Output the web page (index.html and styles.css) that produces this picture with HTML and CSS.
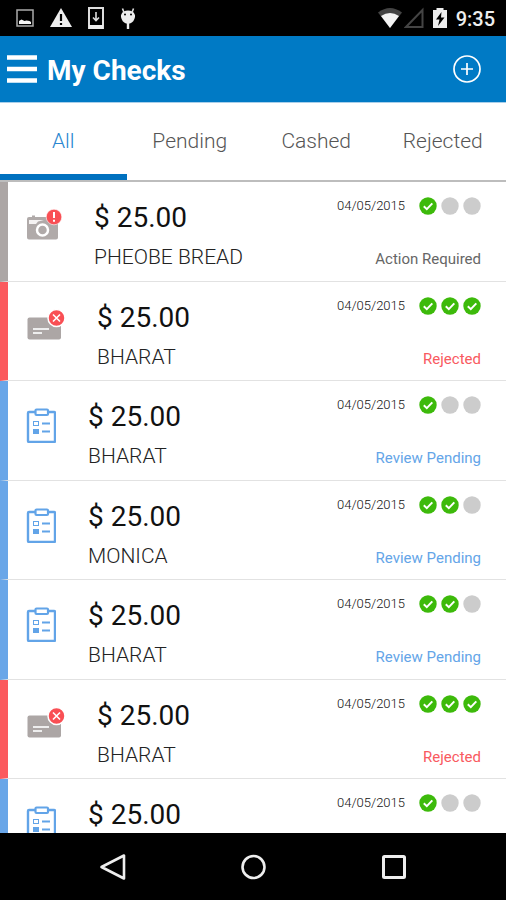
FILE: index.html
```html
<!DOCTYPE html>
<html lang="en">
<head>
<meta charset="utf-8">
<meta name="viewport" content="width=device-width, initial-scale=1">
<title>My Checks</title>
<link rel="stylesheet" href="styles.css">
</head>
<body>
<svg class="defs" aria-hidden="true">
  <symbol id="camera" viewBox="0 0 36 34">
    <path fill="#b0aaa9" d="M3 9h3V7.500h3V9h21a2 2 0 0 1 2 2v18.500a2 2 0 0 1-2 2H3a2 2 0 0 1-2-2V11a2 2 0 0 1 2-2z"/>
    <path fill="#f4f2f2" d="M3 12h15l-6 1.500-2 2.500H3z"/>
    <circle cx="16.500" cy="22" r="5.500" fill="#b0aaa9" stroke="#fff" stroke-width="2.500"/>
    <circle cx="28" cy="9" r="7.800" fill="#f94f54" stroke="#fff" stroke-width=".6"/>
    <path d="M28 4v6M28 11.800v2" stroke="#fff" stroke-width="2"/>
  </symbol>
  <symbol id="card" viewBox="0 0 39 34">
    <rect x="1.500" y="9.500" width="33.500" height="22" rx="2" fill="#aca6a5"/>
    <path d="M7 21h16M7 25h9" stroke="#eee" stroke-width="1.800"/>
    <circle cx="30.500" cy="10" r="8.500" fill="#f94f54" stroke="#fff" stroke-width="1.500"/>
    <path d="M27 6.500l7 7M34 6.500l-7 7" stroke="#fff" stroke-width="1.600"/>
  </symbol>
  <symbol id="clipboard" viewBox="0 0 30 36">
    <rect x="2" y="5" width="27" height="30" rx="1" fill="#fff" stroke="#62a4e8" stroke-width="2.400"/>
    <rect x="9.500" y="2.500" width="12.500" height="5.500" rx="1" fill="#fff" stroke="#62a4e8" stroke-width="2.200"/>
    <rect x="7.500" y="14.500" width="5" height="4" fill="none" stroke="#62a4e8"/>
    <rect x="7" y="22" width="6" height="5" fill="#62a4e8"/>
    <path d="M16 16.500h8M16 24.500h8" stroke="#62a4e8" stroke-width="2"/>
  </symbol>
  <symbol id="done" viewBox="0 0 18 18">
    <circle cx="9" cy="9" r="8.700" fill="#3dba0b"/>
    <path d="M4.800 9.200l3 2.900 5.500-5.700" fill="none" stroke="#fff" stroke-width="2"/>
  </symbol>
  <symbol id="todo" viewBox="0 0 18 18"><circle cx="9" cy="9" r="8.700" fill="#ccc"/></symbol>
</svg>

<div class="status-bar">
  <div class="status-group notices">
    <svg width="18" height="24" viewBox="0 0 18 24"><rect x="1" y="4" width="16" height="16" fill="none" stroke="#aaa" stroke-width="1.500"/><path d="M3 18v-3l2.500-1.500 3 1.500 2-.500 3 .5 1.500 1v2z" fill="#f4f4f4"/></svg>
    <svg width="22" height="24" viewBox="0 0 22 24"><path d="M11 2l11 19H0z" fill="#eee"/><path d="M11 8v7M11 17v2" stroke="#000" stroke-width="2.200"/></svg>
    <svg width="16" height="24" viewBox="0 0 16 24"><path d="M1 2h14v20H1z" fill="none" stroke="#ddd" stroke-width="2"/><path d="M1 19h14v4H1z" fill="#eee"/><path d="M8 6v8M5 11.500l3 3 3-3" fill="none" stroke="#ddd" stroke-width="1.600"/></svg>
    <svg width="16" height="24" viewBox="0 0 16 24"><path d="M3.500 5.500Q8 3.500 12.500 5.500 15.500 8 15 11q-1 5-5 6.500H9.200V23H6.800v-5.500H6Q2 16 1 11 .5 8 3.500 5.500z" fill="#eee"/><path d="M4 6.500L2.500 2.500M12 6.500l1.500-4" stroke="#ddd" stroke-width="1.600"/><circle cx="5" cy="8.500" r="1" fill="#000"/><circle cx="11" cy="8.500" r="1" fill="#000"/></svg>
  </div>
  <div class="status-group signals">
    <svg width="26" height="24" viewBox="0 0 26 24"><path d="M1 6.500Q13-2.500 25 6.500L13 22z" fill="#444"/><path d="M4 10q9-6 18 0l-9 12z" fill="#f4f4f4"/></svg>
    <svg width="20" height="24" viewBox="0 0 20 24"><path d="M18.500 4v17H2z" fill="none" stroke="#444" stroke-width="2"/></svg>
    <svg width="14" height="24" viewBox="0 0 14 24"><path d="M0 4h3.500V2h7v2H14v18H0z" fill="#eee"/><path d="M8.500 6L3 13.500h3.500L5 20l6.500-8.500H8z" fill="#000"/></svg>
    <span class="clock">9:35</span>
  </div>
</div>

<header class="app-bar">
  <button class="icon-button" aria-label="Menu"><svg width="30" height="30" viewBox="0 0 30 30"><path d="M0 3.500h30M0 15h30M0 26.500h30" stroke="#fff" stroke-width="4.500"/></svg></button>
  <h1 class="title">My Checks</h1>
  <button class="icon-button" aria-label="Add check"><svg width="30" height="30" viewBox="0 0 30 30"><g fill="none" stroke="#fff" stroke-width="1.700"><circle cx="15" cy="15" r="13"/><path d="M9 15h12M15 9v12"/></g></svg></button>
</header>

<nav class="tabs">
  <a class="tab active" href="#all" aria-current="page">All</a>
  <a class="tab" href="#pending">Pending</a>
  <a class="tab" href="#cashed">Cashed</a>
  <a class="tab" href="#rejected">Rejected</a>
</nav>

<main class="content">
<ul class="checks">
  <li class="check action">
    <svg class="icon camera"><use href="#camera"/></svg>
    <div class="details"><div class="amount">$ 25.00</div><div class="payee">PHEOBE BREAD</div></div>
    <div class="state"><div class="progress"><time class="date">04/05/2015</time><svg class="step"><use href="#done"/></svg><svg class="step"><use href="#todo"/></svg><svg class="step"><use href="#todo"/></svg></div><div class="label">Action Required</div></div>
  </li>
  <li class="check rejected">
    <svg class="icon card"><use href="#card"/></svg>
    <div class="details"><div class="amount">$ 25.00</div><div class="payee">BHARAT</div></div>
    <div class="state"><div class="progress"><time class="date">04/05/2015</time><svg class="step"><use href="#done"/></svg><svg class="step"><use href="#done"/></svg><svg class="step"><use href="#done"/></svg></div><div class="label">Rejected</div></div>
  </li>
  <li class="check review">
    <svg class="icon clipboard"><use href="#clipboard"/></svg>
    <div class="details"><div class="amount">$ 25.00</div><div class="payee">BHARAT</div></div>
    <div class="state"><div class="progress"><time class="date">04/05/2015</time><svg class="step"><use href="#done"/></svg><svg class="step"><use href="#todo"/></svg><svg class="step"><use href="#todo"/></svg></div><div class="label">Review Pending</div></div>
  </li>
  <li class="check review">
    <svg class="icon clipboard"><use href="#clipboard"/></svg>
    <div class="details"><div class="amount">$ 25.00</div><div class="payee">MONICA</div></div>
    <div class="state"><div class="progress"><time class="date">04/05/2015</time><svg class="step"><use href="#done"/></svg><svg class="step"><use href="#done"/></svg><svg class="step"><use href="#todo"/></svg></div><div class="label">Review Pending</div></div>
  </li>
  <li class="check review">
    <svg class="icon clipboard"><use href="#clipboard"/></svg>
    <div class="details"><div class="amount">$ 25.00</div><div class="payee">BHARAT</div></div>
    <div class="state"><div class="progress"><time class="date">04/05/2015</time><svg class="step"><use href="#done"/></svg><svg class="step"><use href="#done"/></svg><svg class="step"><use href="#todo"/></svg></div><div class="label">Review Pending</div></div>
  </li>
  <li class="check rejected">
    <svg class="icon card"><use href="#card"/></svg>
    <div class="details"><div class="amount">$ 25.00</div><div class="payee">BHARAT</div></div>
    <div class="state"><div class="progress"><time class="date">04/05/2015</time><svg class="step"><use href="#done"/></svg><svg class="step"><use href="#done"/></svg><svg class="step"><use href="#done"/></svg></div><div class="label">Rejected</div></div>
  </li>
  <li class="check review">
    <svg class="icon clipboard"><use href="#clipboard"/></svg>
    <div class="details"><div class="amount">$ 25.00</div></div>
    <div class="state"><div class="progress"><time class="date">04/05/2015</time><svg class="step"><use href="#done"/></svg><svg class="step"><use href="#todo"/></svg><svg class="step"><use href="#todo"/></svg></div></div>
  </li>
</ul>
</main>

<footer class="system-nav">
  <button class="icon-button" aria-label="Back"><svg width="28" height="28" viewBox="0 0 28 28"><path d="M25 2.500v23L2.500 14z" fill="none" stroke="#eee" stroke-width="2.600" stroke-linejoin="round"/></svg></button>
  <button class="icon-button" aria-label="Home"><svg width="28" height="28" viewBox="0 0 28 28"><circle cx="14.500" cy="14" r="11" fill="none" stroke="#eee" stroke-width="2.600"/></svg></button>
  <button class="icon-button" aria-label="Recent apps"><svg width="28" height="28" viewBox="0 0 28 28"><rect x="4.500" y="3.500" width="21" height="21" rx="1" fill="none" stroke="#eee" stroke-width="3"/></svg></button>
</footer>
</body>
</html>
```
FILE: styles.css
```css
* { box-sizing: border-box; }

body {
  margin: 0;
  height: 100vh;
  display: flex;
  flex-direction: column;
  background: #fff;
  color: #111;
  font-family: Roboto, "Liberation Sans", sans-serif;
}

svg { display: block; flex: none; }
.defs { display: none; }

.icon-button {
  display: block;
  padding: 0;
  border: 0;
  background: none;
  cursor: pointer;
}

.status-bar {
  flex: none;
  height: 36px;
  padding: 0 11px 0 16px;
  display: flex;
  align-items: center;
  justify-content: space-between;
  background: #000;
  color: #eee;
}
.status-group { display: flex; align-items: center; }
.notices { gap: 16px; }
.signals { gap: 9px; }
.signals svg:first-child { margin-right: -8px; }
.clock { font-size: 20px; line-height: 22px; padding-top: 2px; font-weight: 500; }

.app-bar {
  flex: none;
  height: 67px;
  padding: 0 24px 0 7px;
  display: flex;
  align-items: center;
  gap: 10px;
  background: #007ac5;
  border-bottom: 1px solid #a9cfea;
  color: #fff;
}
.title {
  flex: 1;
  margin: 0;
  padding-top: 4px;
  font-size: 28px;
  line-height: 36px;
  font-weight: 700;
}

.tabs {
  flex: none;
  display: grid;
  grid-template-columns: repeat(4, 1fr);
  border-bottom: 2px solid #bdbdbd;
}
.tab {
  height: 77px;
  padding-top: 6px;
  border-bottom: 6px solid transparent;
  color: #555;
  font-size: 21px;
  line-height: 64px;
  font-weight: 300;
  text-align: center;
  text-decoration: none;
}
.tab.active { color: #2a87d0; border-color: #0071bf; }

.content { flex: 1; min-height: 0; overflow: hidden; }
.checks {
  margin: 0;
  padding: 0;
  list-style: none;
  display: grid;
  grid-auto-rows: 100px 99px;
}

.check {
  padding: 0 25px 0 18px;
  display: flex;
  gap: 32px;
  border-left: 8px solid;
  border-bottom: 1px solid #e2e2e2;
}
.check.action { border-left-color: #aca6a5; }
.check.rejected { border-left-color: #fb5a5e; }
.check.review { border-left-color: #69a6e8; }

.icon { margin-top: 26px; height: 34px; }
.camera { width: 36px; }
.card { width: 39px; }
.clipboard { width: 30px; height: 36px; }

.details { flex: 1; padding-top: 18px; }
.amount { font-size: 28px; line-height: 36px; font-weight: 400; }
.payee { margin-top: 8px; font-size: 21px; line-height: 26px; font-weight: 300; color: #222; }

.state { padding-top: 15px; }
.progress { display: flex; align-items: center; justify-content: flex-end; gap: 4px; }
.date { margin-right: 10px; font-size: 13px; line-height: 18px; font-weight: 300; color: #111; }
.step { width: 18px; height: 18px; }
.label { margin-top: 34px; font-size: 15px; line-height: 20px; text-align: right; }
.action .label { color: #666; }
.rejected .label { color: #f95a5f; }
.review .label { color: #64a5e8; }

.system-nav {
  flex: none;
  height: 67px;
  display: flex;
  align-items: center;
  justify-content: center;
  gap: 112px;
  background: #000;
}
```
